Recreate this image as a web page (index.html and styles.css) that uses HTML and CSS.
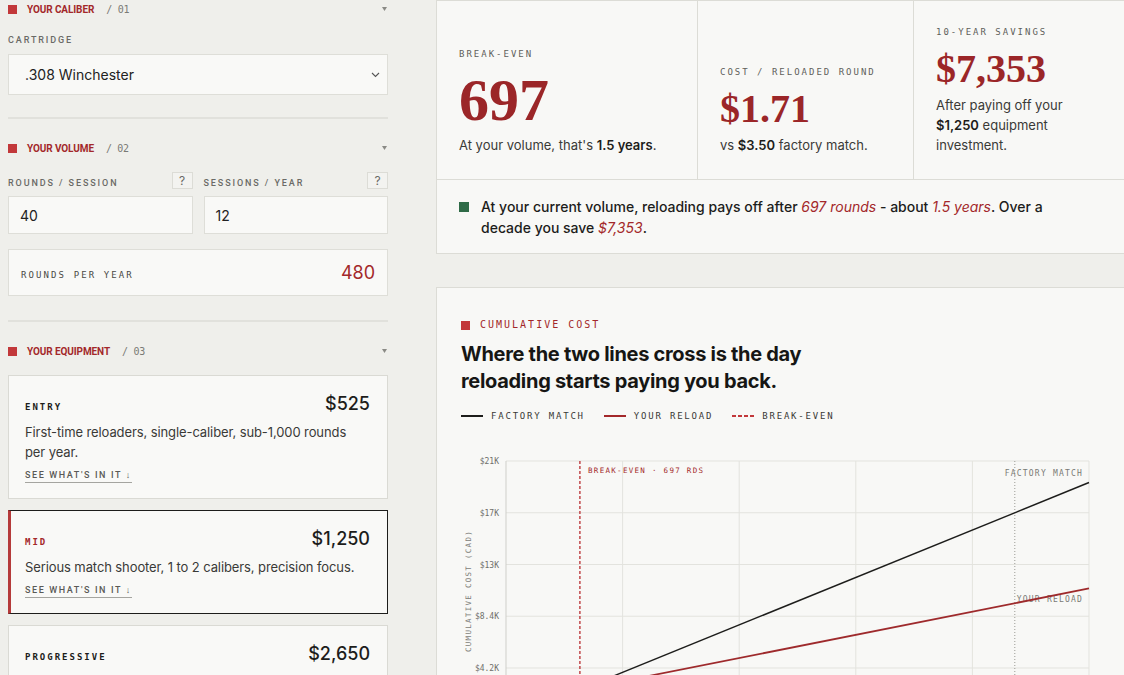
FILE: index.html
```html
<!DOCTYPE html>
<html lang="en">
<head>
<meta charset="utf-8">
<title>Reloading Break-Even Calculator</title>
<link rel="stylesheet" href="styles.css">
</head>
<body>
<div class="app">
  <aside class="sidebar">
    <section class="panel panel-first">
      <header class="panel-head">
        <span class="panel-mark"></span>
        <span class="panel-title">YOUR CALIBER</span>
        <span class="panel-num">/ 01</span>
        <svg class="panel-caret" width="5" height="4" viewBox="0 0 5 4"><path d="M0 0h5L2.5 4z"/></svg>
      </header>
      <div class="field-label">CARTRIDGE</div>
      <div class="select">
        <span>.308 Winchester</span>
        <svg width="9" height="6" viewBox="0 0 9 6"><polyline points="1,1 4.5,4.5 8,1" fill="none" stroke="#555" stroke-width="1.1"/></svg>
      </div>
    </section>

    <section class="panel">
      <header class="panel-head">
        <span class="panel-mark"></span>
        <span class="panel-title">YOUR VOLUME</span>
        <span class="panel-num">/ 02</span>
        <svg class="panel-caret" width="5" height="4" viewBox="0 0 5 4"><path d="M0 0h5L2.5 4z"/></svg>
      </header>
      <div class="pair">
        <div class="pair-col">
          <div class="pair-label"><span class="field-label">ROUNDS / SESSION</span><span class="help">?</span></div>
          <div class="input">40</div>
        </div>
        <div class="pair-col">
          <div class="pair-label"><span class="field-label">SESSIONS / YEAR</span><span class="help">?</span></div>
          <div class="input">12</div>
        </div>
      </div>
      <div class="total">
        <span class="total-label">ROUNDS PER YEAR</span>
        <span class="total-value">480</span>
      </div>
    </section>

    <section class="panel">
      <header class="panel-head">
        <span class="panel-mark"></span>
        <span class="panel-title">YOUR EQUIPMENT</span>
        <span class="panel-num">/ 03</span>
        <svg class="panel-caret" width="5" height="4" viewBox="0 0 5 4"><path d="M0 0h5L2.5 4z"/></svg>
      </header>
      <div class="tiers">
        <article class="tier">
          <div class="tier-top"><span class="tier-name">ENTRY</span><span class="tier-price">$525</span></div>
          <p class="tier-desc">First-time reloaders, single-caliber, sub-1,000 rounds per year.</p>
          <span class="tier-link">SEE WHAT'S IN IT ↓</span>
        </article>
        <article class="tier tier-active">
          <div class="tier-top"><span class="tier-name">MID</span><span class="tier-price">$1,250</span></div>
          <p class="tier-desc">Serious match shooter, 1 to 2 calibers, precision focus.</p>
          <span class="tier-link">SEE WHAT'S IN IT ↓</span>
        </article>
        <article class="tier">
          <div class="tier-top"><span class="tier-name">PROGRESSIVE</span><span class="tier-price">$2,650</span></div>
          <p class="tier-desc">High-volume shooters loading several calibers every month.</p>
          <span class="tier-link">SEE WHAT'S IN IT ↓</span>
        </article>
      </div>
    </section>
  </aside>

  <main class="main">
    <div class="stats">
      <div class="stat">
        <div class="stat-label">BREAK-EVEN</div>
        <div class="stat-value stat-big">697</div>
        <p class="stat-note">At your volume, that's <strong>1.5 years</strong>.</p>
      </div>
      <div class="stat">
        <div class="stat-label">COST / RELOADED ROUND</div>
        <div class="stat-value">$1.71</div>
        <p class="stat-note">vs <strong>$3.50</strong> factory match.</p>
      </div>
      <div class="stat">
        <div class="stat-label">10-YEAR SAVINGS</div>
        <div class="stat-value">$7,353</div>
        <p class="stat-note stat-narrow">After paying off your <strong>$1,250</strong> equipment investment.</p>
      </div>
    </div>

    <div class="summary">
      <span class="summary-mark"></span>
      <p class="summary-text">At your current volume, reloading pays off after <em>697 rounds</em> - about <em>1.5 years</em>. Over a decade you save <em>$7,353</em>.</p>
    </div>

    <section class="chart-card">
      <div class="chart-kicker"><span class="kicker-mark"></span>CUMULATIVE COST</div>
      <h2 class="chart-title">Where the two lines cross is the day reloading starts paying you back.</h2>
      <div class="legend">
        <span class="legend-item"><span class="swatch swatch-factory"></span>FACTORY MATCH</span>
        <span class="legend-item"><span class="swatch swatch-reload"></span>YOUR RELOAD</span>
        <span class="legend-item"><span class="swatch swatch-even"></span>BREAK-EVEN</span>
      </div>
      <svg class="chart" width="640" height="310" viewBox="0 0 640 310">
        <!-- grid: $0..$21K on y, 0..5500 rounds on x -->
        <g class="grid">
          <line x1="45" y1="11" x2="628" y2="11"/>
          <line x1="45" y1="62.75" x2="628" y2="62.75"/>
          <line x1="45" y1="114.5" x2="628" y2="114.5"/>
          <line x1="45" y1="166.25" x2="628" y2="166.25"/>
          <line x1="45" y1="218" x2="628" y2="218"/>
          <line x1="161.6" y1="11" x2="161.6" y2="269.75"/>
          <line x1="278.2" y1="11" x2="278.2" y2="269.75"/>
          <line x1="394.8" y1="11" x2="394.8" y2="269.75"/>
          <line x1="511.4" y1="11" x2="511.4" y2="269.75"/>
          <line x1="628" y1="11" x2="628" y2="269.75"/>
        </g>
        <line class="axis" x1="45" y1="11" x2="45" y2="269.75"/>
        <line class="axis" x1="45" y1="269.75" x2="628" y2="269.75"/>

        <g class="ytick">
          <text x="38" y="14">$21K</text>
          <text x="38" y="65.75">$17K</text>
          <text x="38" y="117.5">$13K</text>
          <text x="38" y="169.25">$8.4K</text>
          <text x="38" y="221">$4.2K</text>
          <text x="38" y="272.75">$0</text>
        </g>
        <text class="ytitle" transform="translate(10 141) rotate(-90)">CUMULATIVE COST (CAD)</text>

        <g class="xtick">
          <text x="45" y="284">0</text>
          <text x="161.6" y="284">1,100</text>
          <text x="278.2" y="284">2,200</text>
          <text x="394.8" y="284">3,300</text>
          <text x="511.4" y="284">4,400</text>
          <text x="628" y="284">5,500</text>
        </g>
        <text class="xtitle" x="336" y="302">ROUNDS FIRED</text>

        <!-- ten-year marker at 4,800 rounds -->
        <line class="decade" x1="553.8" y1="11" x2="553.8" y2="269.75"/>
        <!-- break-even at 697 rounds -->
        <line class="even" x1="118.9" y1="11" x2="118.9" y2="269.75"/>
        <text class="even-label" x="127" y="23">BREAK-EVEN · 697 RDS</text>

        <text class="line-label" x="622" y="26">FACTORY MATCH</text>
        <text class="line-label" x="622" y="152">YOUR RELOAD</text>

        <line class="factory" x1="45" y1="269.75" x2="628" y2="32.56"/>
        <line class="reload" x1="45" y1="254.35" x2="628" y2="138.46"/>
      </svg>
    </section>
  </main>
</div>
</body>
</html>
```

FILE: styles.css
```css
* { box-sizing: border-box; }

html, body {
  margin: 0;
  background: #efefeb;
  color: #1d1d1b;
  font-family: Inter, Roboto, "Noto Sans", sans-serif;
}

.app {
  display: grid;
  grid-template-columns: 380px 1fr;
  column-gap: 48px;
  padding-left: 8px;
  align-items: start;
}

/* ---------- sidebar ---------- */

.panel {
  padding: 20px 0 22px;
  border-bottom: 2px solid #e1e1dc;
}
.panel-first { padding-top: 0; }
.panel:nth-child(2) { padding-bottom: 24px; }
.panel:last-child { border-bottom: 0; }

.panel-head {
  display: flex;
  align-items: center;
  height: 18px;
  margin-bottom: 15px;
}
.panel-first .panel-head { margin-bottom: 16px; }

.panel-mark {
  width: 9px;
  height: 9px;
  background: #c2383a;
  margin-right: 10px;
}
.panel-title {
  font-family: Roboto, sans-serif;
  font-size: 10px;
  font-weight: 700;
  color: #a3282a;
  letter-spacing: -0.1px;
}
.panel-num {
  margin-left: 12px;
  font-size: 10px;
  color: #7a7a75;
  font-family: "DejaVu Sans Mono", monospace;
  letter-spacing: -0.3px;
}
.panel-caret {
  margin-left: auto;
  margin-right: 1px;
  fill: #8a8a85;
}

.field-label {
  display: block;
  font-family: Roboto, sans-serif;
  font-size: 9px;
  font-weight: 500;
  letter-spacing: 1.9px;
  color: #6a6a66;
  line-height: 12px;
}
.panel-first .field-label { margin-top: 1px; }

.select {
  margin-top: 8px;
  height: 41px;
  border: 1px solid #deded8;
  background: #f9f9f7;
  display: flex;
  align-items: center;
  justify-content: space-between;
  padding: 0 7px 0 16px;
  font-size: 14px;
  color: #222;
}

.pair {
  display: grid;
  grid-template-columns: 1fr 1fr;
  column-gap: 11px;
}
.pair-label {
  display: flex;
  justify-content: space-between;
  align-items: center;
  height: 17px;
}
.pair-label .field-label { margin-top: 4px; }
.help {
  width: 21px;
  height: 17px;
  border: 1px solid #dcdcd6;
  background: #f3f3f0;
  font-size: 12px;
  color: #6a6a66;
  display: flex;
  align-items: center;
  justify-content: center;
}
.input {
  margin-top: 7px;
  height: 38px;
  border: 1px solid #deded8;
  background: #f9f9f7;
  display: flex;
  align-items: center;
  padding-left: 11px;
  font-size: 14px;
  color: #222;
}

.total {
  margin-top: 15px;
  height: 47px;
  border: 1px solid #deded8;
  background: #f9f9f7;
  display: flex;
  align-items: center;
  justify-content: space-between;
  padding: 0 12px;
}
.total-label {
  font-family: "DejaVu Sans Mono", monospace;
  font-size: 9px;
  letter-spacing: 2.1px;
  color: #4a4a46;
  margin-top: 4px;
}
.total-value {
  font-size: 18px;
  color: #a3282a;
}

.tiers {
  display: flex;
  flex-direction: column;
  gap: 11px;
}
.tier {
  border: 1px solid #dadad4;
  background: #f9f9f7;
  padding: 16px 16px 15px;
}
.tier-active {
  border-color: #1d1d1b;
  border-left: 3px solid #b53a3a;
  padding-left: 14px;
}
.tier-top {
  display: flex;
  justify-content: space-between;
  align-items: baseline;
  height: 24px;
  line-height: 24px;
}
.tier-name {
  font-family: "DejaVu Sans Mono", monospace;
  font-size: 9px;
  font-weight: 700;
  letter-spacing: 2px;
  color: #1d1d1b;
}
.tier-active .tier-name { color: #a3282a; }
.tier-price {
  font-size: 18px;
  font-weight: 500;
  color: #1d1d1b;
  margin-right: 1px;
}
.tier-desc {
  margin: 6px 0 0;
  max-width: 338px;
  font-size: 13px;
  line-height: 20px;
  letter-spacing: -0.1px;
  color: #3a3a37;
}
.tier-link {
  display: inline-block;
  margin-top: 7px;
  font-family: Roboto, sans-serif;
  font-size: 9px;
  font-weight: 500;
  letter-spacing: 1.6px;
  line-height: 12px;
  color: #5a5a56;
  border-bottom: 1px solid #a5a5a0;
  padding-bottom: 1px;
}

/* ---------- main ---------- */

.stats {
  display: grid;
  grid-template-columns: 260px 216px 1fr;
  height: 180px;
  border: 1px solid #dcdcd6;
  background: #f8f8f6;
}
.stat {
  display: flex;
  flex-direction: column;
  justify-content: flex-end;
  padding: 0 20px 24px 22px;
}
.stat + .stat { border-left: 1px solid #dcdcd6; }

.stat-label {
  font-family: "DejaVu Sans Mono", monospace;
  font-size: 9px;
  letter-spacing: 2px;
  line-height: 12px;
  color: #5f5f5b;
}
.stat-value {
  font-family: "Liberation Serif", "DejaVu Serif", serif;
  font-weight: 700;
  font-size: 40px;
  line-height: 40px;
  color: #9b2628;
  margin: 11px 0 6px;
}
.stat-big {
  font-size: 60px;
  line-height: 60px;
  margin: 10px 0 5px;
}
.stat-note {
  margin: 0;
  font-size: 13px;
  line-height: 20px;
  color: #3a3a37;
}
.stat-note strong { font-weight: 600; color: #1d1d1b; }
.stat-narrow { max-width: 150px; }

.summary {
  display: flex;
  gap: 12px;
  border: 1px solid #dcdcd6;
  border-top: 0;
  background: #f8f8f6;
  padding: 16px 24px 15px 22px;
}
.summary-mark {
  flex: none;
  width: 10px;
  height: 10px;
  background: #2f6b47;
  margin-top: 6px;
}
.summary-text {
  margin: 0;
  font-size: 14px;
  font-weight: 500;
  line-height: 21px;
  color: #1d1d1b;
  max-width: 590px;
}
.summary-text em {
  font-style: italic;
  font-weight: 400;
  color: #a3282a;
}

.chart-card {
  margin-top: 33px;
  border: 1px solid #dcdcd6;
  background: #f8f8f6;
  padding: 31px 24px 40px;
}
.chart-kicker {
  display: flex;
  align-items: center;
  font-family: "DejaVu Sans Mono", monospace;
  font-size: 10px;
  letter-spacing: 2px;
  line-height: 12px;
  color: #a3282a;
}
.kicker-mark {
  width: 9px;
  height: 9px;
  background: #c2383a;
  margin-right: 10px;
}
.chart-title {
  margin: 10px 0 0;
  font-size: 20px;
  font-weight: 700;
  line-height: 27px;
  letter-spacing: -0.3px;
  max-width: 390px;
  color: #161614;
}
.legend {
  display: flex;
  gap: 19px;
  margin-top: 15px;
  font-family: "DejaVu Sans Mono", monospace;
  font-size: 9px;
  letter-spacing: 1.8px;
  line-height: 12px;
  color: #3a3a37;
}
.legend-item {
  display: flex;
  align-items: center;
  gap: 8px;
}
.swatch {
  width: 22px;
  height: 2px;
}
.swatch-factory { background: #1d1d1b; }
.swatch-reload { background: #a3282a; }
.swatch-even {
  background: repeating-linear-gradient(90deg, #c2383a 0 4px, transparent 4px 6px);
}

.chart {
  display: block;
  margin-top: 28px;
  overflow: visible;
}
.grid line { stroke: #e3e3de; stroke-width: 1; }
.axis { stroke: #cfcfca; stroke-width: 1; }
.ytick text {
  font-family: "DejaVu Sans Mono", monospace;
  font-size: 8px;
  fill: #6f6f6a;
  text-anchor: end;
}
.xtick text {
  font-family: "DejaVu Sans Mono", monospace;
  font-size: 8px;
  fill: #6f6f6a;
  text-anchor: middle;
}
.ytitle, .xtitle {
  font-family: "DejaVu Sans Mono", monospace;
  font-size: 7.5px;
  letter-spacing: 1.3px;
  fill: #7d7d78;
  text-anchor: middle;
}
.decade {
  stroke: #9a9a95;
  stroke-width: 1;
  stroke-dasharray: 1 2;
}
.even {
  stroke: #c0474a;
  stroke-width: 1.5;
  stroke-dasharray: 3 2;
}
.even-label {
  font-family: "DejaVu Sans Mono", monospace;
  font-size: 7.5px;
  letter-spacing: 1.3px;
  fill: #a3282a;
}
.line-label {
  font-family: "DejaVu Sans Mono", monospace;
  font-size: 8px;
  letter-spacing: 1.2px;
  fill: #7a7a75;
  text-anchor: end;
}
.factory { stroke: #1d1d1b; stroke-width: 1.5; }
.reload { stroke: #9e2a2c; stroke-width: 1.8; }
```
